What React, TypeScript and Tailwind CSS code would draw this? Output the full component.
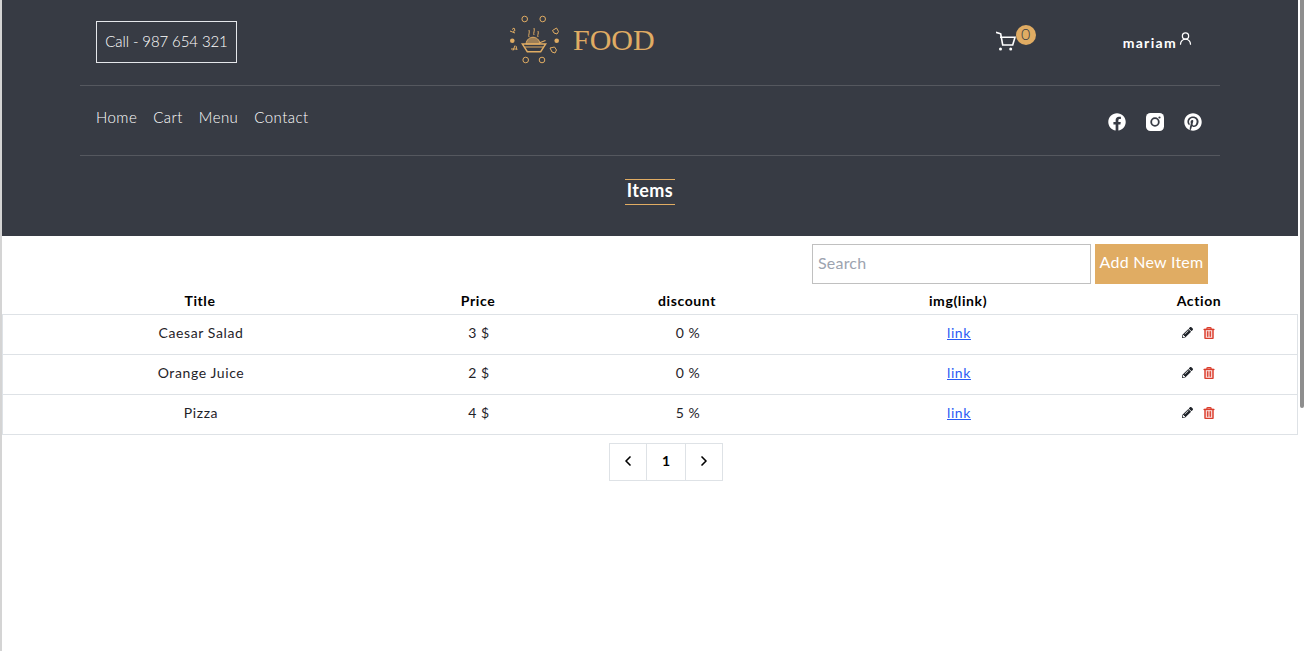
import { ChevronLeft, ChevronRight, UserRound } from "lucide-react";
import { FaFacebook, FaPencilAlt, FaPinterest, FaRegTrashAlt } from "react-icons/fa";

const items = [
  { title: "Caesar Salad", price: "3 $", discount: "0 %" },
  { title: "Orange Juice", price: "2 $", discount: "0 %" },
  { title: "Pizza", price: "4 $", discount: "5 %" },
];

const navLinks = ["Home", "Cart", "Menu", "Contact"];

function Logo() {
  const gold = "#e0ac63";
  return (
    <svg width="50" height="50" viewBox="0 0 50 50" fill="none" stroke={gold} strokeWidth="1">
      {/* ring of small dishes */}
      <circle cx="15.700" cy="4" r="2.800" />
      <circle cx="33.700" cy="4" r="2.800" />
      <circle cx="16.700" cy="45" r="2.800" />
      <circle cx="33" cy="45" r="2.800" />
      <path d="M1 16l5 2M3 14.500l2-1.500 1 2.500-2 1" />
      <path d="M2 34h6M6 30.500l-2 5M7 31l1 4" />
      <path d="M43.500 15.500l4-2.500 2 3.500-1.500 2.500-3-1z" />
      <path d="M41 33l4.500-1 2 3-1.500 3-3-1z" />
      <circle cx="3.300" cy="25.700" r="2.300" fill={gold} stroke="none" />
      <circle cx="47.700" cy="25.700" r="2.300" fill={gold} stroke="none" />
      {/* steam */}
      <path d="M20 22c-1-2 1-4 0-7M25 20c-1-2 1-4 0-7M29 22c-1-2 1-3 0-6" />
      {/* noodles and bowl */}
      <path d="M17 29c1-9 13-9 14 0z" fill={gold} fillOpacity="0.6" />
      <path d="M30 28l6.500-2.500" strokeWidth="1.300" />
      <path d="M13.300 29h23.400l-5 7.700H18.300z" strokeWidth="1.400" />
      <path d="M15.500 32h19" />
    </svg>
  );
}

function CartIcon() {
  return (
    <svg width="20" height="20" viewBox="0 0 20 20" fill="none" stroke="white" strokeWidth="1.600">
      <path d="M0 1.300l4.700 1.500 2 11.200h10l2.300-7.700H4" />
      <circle cx="4.500" cy="18" r="1.500" fill="white" stroke="none" />
      <circle cx="14.700" cy="18" r="1.500" fill="white" stroke="none" />
    </svg>
  );
}

function InstagramIcon() {
  return (
    <svg width="18" height="18" viewBox="0 0 18 18">
      <rect width="18" height="18" rx="4.500" fill="white" />
      <circle cx="9" cy="9" r="3.800" fill="none" stroke="#373b44" strokeWidth="1.800" />
      <circle cx="13.500" cy="4.500" r="1.100" fill="#373b44" />
    </svg>
  );
}

function Header() {
  return (
    <header className="bg-[#373b44] h-[236px] flex flex-col items-center">
      <div className="w-[1140px] h-[86px] border-b border-[#55585f] flex items-center shrink-0 pb-[2px]">
        <div className="ml-4 w-[141px] h-[42px] border border-[#e5e7eb] flex items-center justify-center text-white text-[15px] font-light tracking-[-0.1px]">
          Call - 987 654 321
        </div>
        <div className="ml-[272px] -mt-1 flex items-center gap-[14px] text-[#e0ac63]">
          <Logo />
          <span className="text-[30px] leading-none font-['Liberation_Serif',serif]">FOOD</span>
        </div>
        <div className="ml-[341px] relative h-5 -mt-0.5">
          <CartIcon />
          <span className="absolute -top-[6px] left-[20px] w-5 h-5 rounded-full bg-[#e0ac63] text-[#373b44] text-base leading-[18px] text-center font-light">
            0
          </span>
        </div>
        <div className="ml-[107px] mt-0.5 flex items-start text-white text-sm font-bold tracking-[1.3px]">
          <span>mariam</span>
          <UserRound className="w-[15px] h-[15px] -mt-0.5 ml-px" strokeWidth={2} />
        </div>
      </div>

      <div className="w-[1140px] h-[70px] border-b border-[#55585f] flex justify-between shrink-0 pl-4 pr-[18px]">
        <nav className="flex gap-4 pt-[21px] text-[15px] leading-5 text-white font-light tracking-[0.45px]">
          {navLinks.map((link) => (
            <a key={link} href="#">
              {link}
            </a>
          ))}
        </nav>
        <div className="flex gap-5 pt-[27px] text-white text-[18px]">
          <FaFacebook />
          <InstagramIcon />
          <FaPinterest />
        </div>
      </div>

      <h1 className="mt-[23px] w-[50px] h-[26px] border-y border-[#e0ac63] text-white text-lg font-bold leading-[20px] text-center tracking-[0.4px]">
        Items
      </h1>
    </header>
  );
}

function ItemsTable() {
  const cols = "grid grid-cols-[396px_160px_258px_284px_198px] items-center text-center";
  return (
    <div className="text-sm tracking-[0.6px]">
      <div className={`${cols} h-[22px] font-bold text-black pb-1 leading-4`}>
        <span>Title</span>
        <span>Price</span>
        <span>discount</span>
        <span>img(link)</span>
        <span>Action</span>
      </div>
      <div className="border border-[#dee2e6]">
        {items.map((item, i) => (
          <div
            key={item.title}
            className={`${cols} ${i > 0 ? "h-[40px] border-t border-[#dee2e6]" : "h-[39px]"} pb-1 text-[#1f2329]`}
          >
            <span>{item.title}</span>
            <span>{item.price}</span>
            <span>{item.discount}</span>
            <a href="#" className="text-[#2a5cf5] underline">
              link
            </a>
            <span className="flex items-center justify-center gap-2.5 pr-1 text-[12px]">
              <FaPencilAlt className="text-[#1f2329] text-[11px]" />
              <FaRegTrashAlt className="text-[#dc3f2e]" stroke="currentColor" strokeWidth={20} />
            </span>
          </div>
        ))}
      </div>
    </div>
  );
}

export default function App() {
  return (
    <div className="h-[651px] overflow-hidden bg-white font-['Lato',sans-serif] relative pr-[6px] border-l-2 border-[#d4d4d4]">
      <Header />

      <div className="h-[56px] flex items-start justify-end pt-2 pr-[90px]">
        <input
          placeholder="Search"
          className="w-[279px] h-10 border border-[#c0c0c0] px-[5px] pb-1 text-base outline-none placeholder:text-[#9ca3af] tracking-[0.2px]"
        />
        <button className="ml-1 w-[113px] h-10 pb-1 bg-[#e0ac63] text-white text-base tracking-[0.25px]">
          Add New Item
        </button>
      </div>

      <ItemsTable />

      <div className="mt-2 flex justify-center pl-[32px]">
        <div className="flex h-[38px] border border-[#dee2e6] text-black text-sm font-bold">
          <span className="w-9 pb-0.5 flex items-center justify-center">
            <ChevronLeft className="w-4 h-4" strokeWidth={2.5} />
          </span>
          <span className="w-[40px] pb-0.5 flex items-center justify-center border-x border-[#dee2e6]">1</span>
          <span className="w-9 pb-0.5 flex items-center justify-center">
            <ChevronRight className="w-4 h-4" strokeWidth={2.5} />
          </span>
        </div>
      </div>

      {/* scrollbar thumb */}
      <div className="absolute top-0 right-0 w-[4px] h-[408px] bg-[#8e8e8e] rounded-b-sm" />
    </div>
  );
}
